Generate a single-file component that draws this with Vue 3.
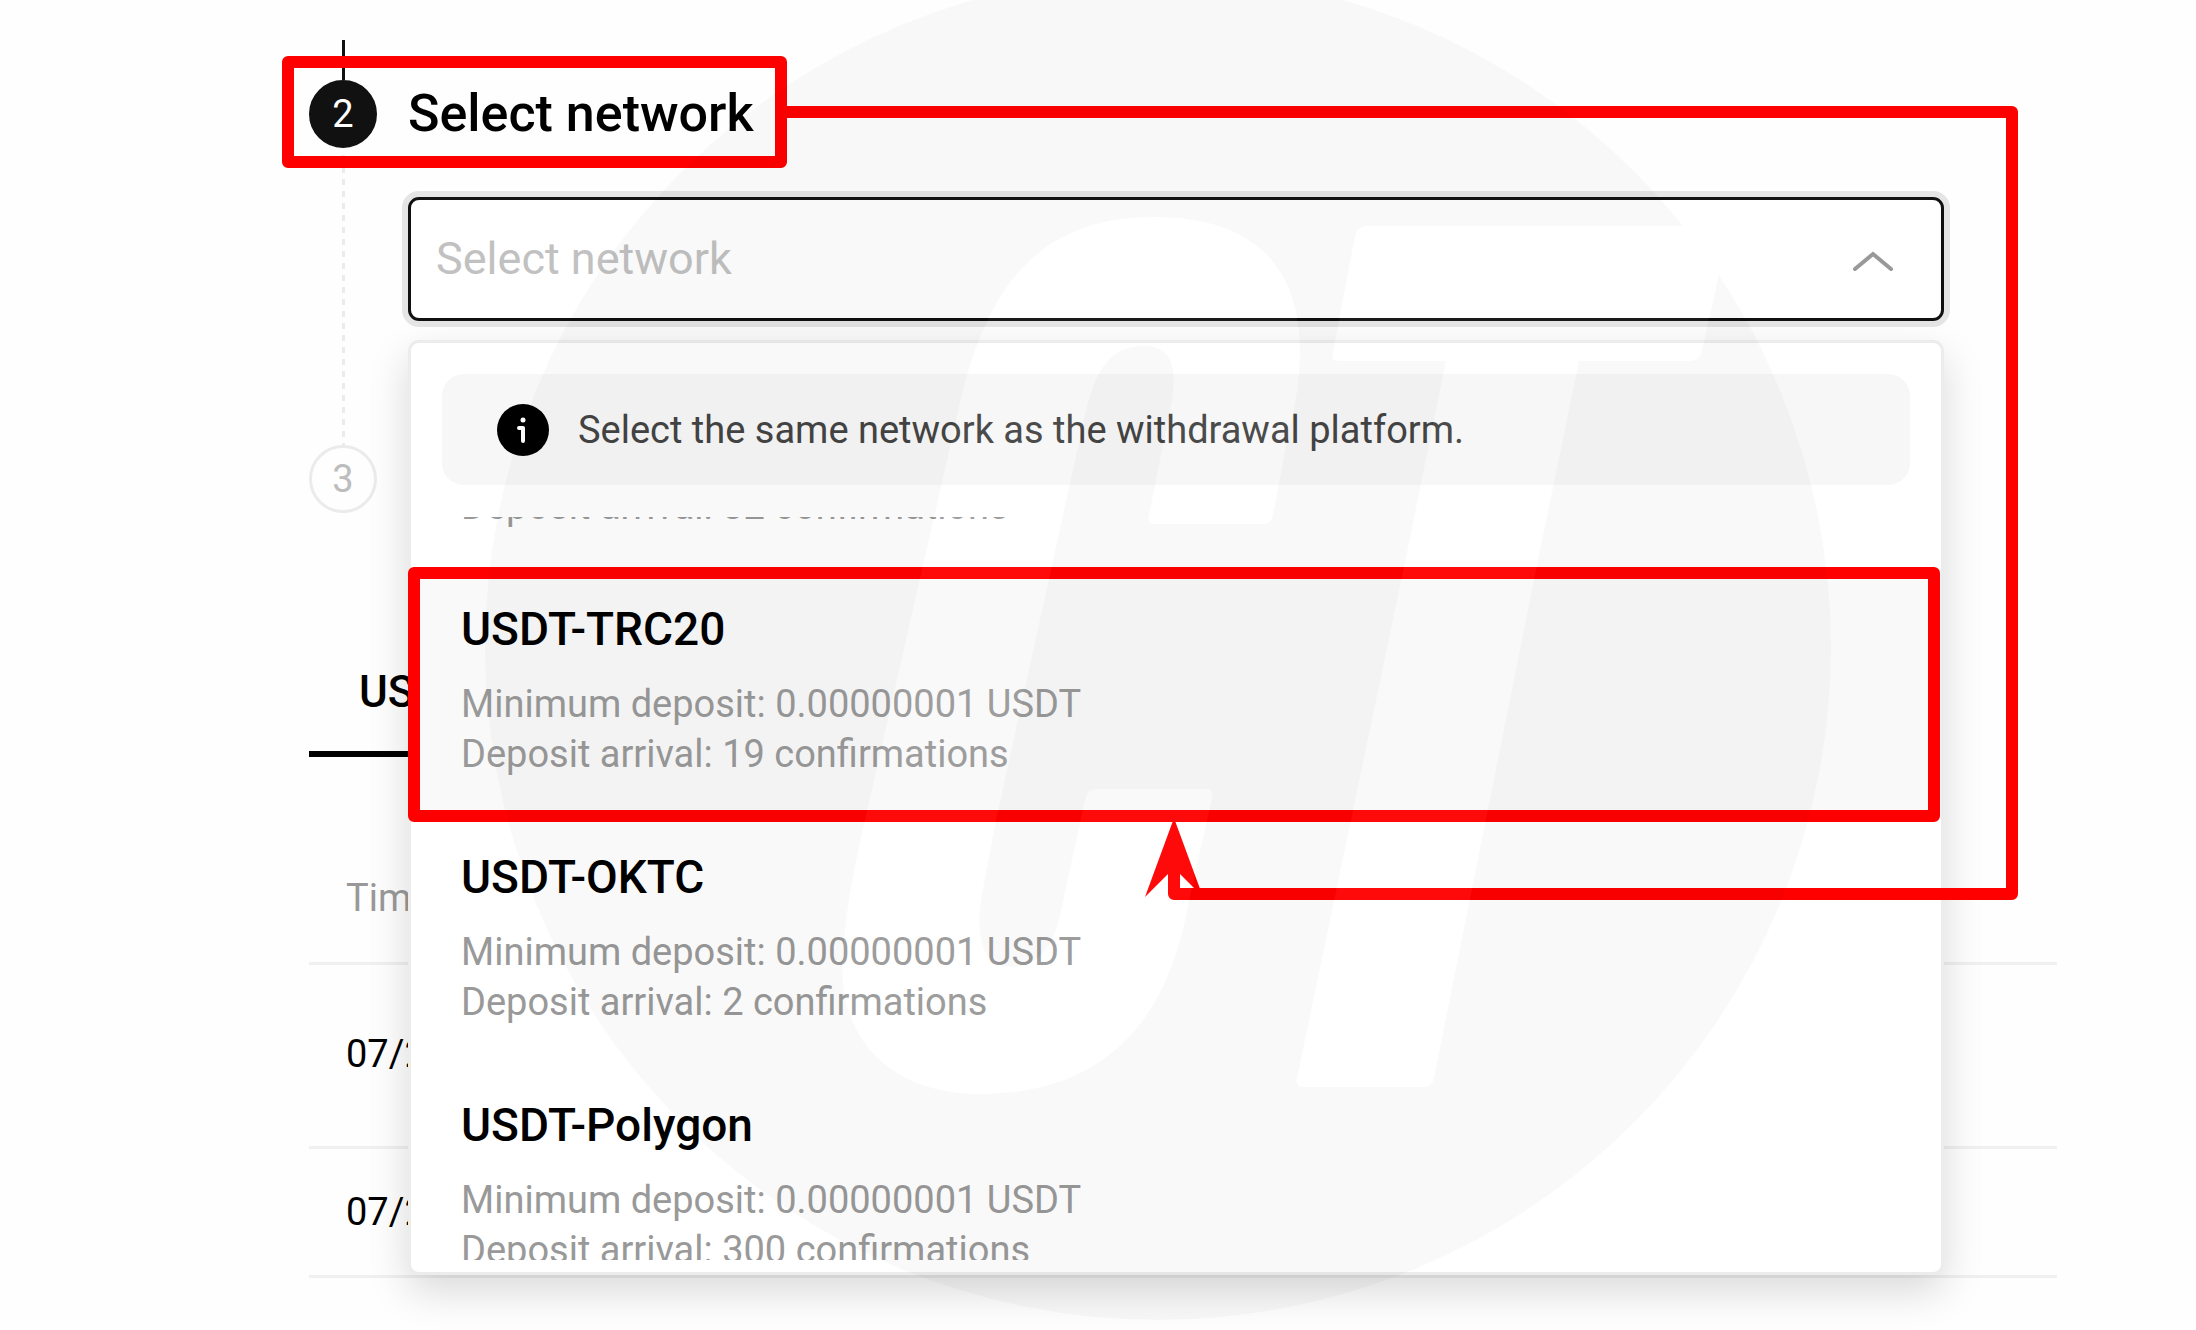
<script setup>
import { onMounted, ref } from 'vue'

const networks = [
  { name: 'USDT-ERC20', minimum: '0.00000001 USDT', confirmations: 32 },
  { name: 'USDT-TRC20', minimum: '0.00000001 USDT', confirmations: 19 },
  { name: 'USDT-OKTC', minimum: '0.00000001 USDT', confirmations: 2 },
  { name: 'USDT-Polygon', minimum: '0.00000001 USDT', confirmations: 300 }
]
const highlighted = 'USDT-TRC20'
const deposits = ['07/24', '07/24']
const list = ref(null)

// The first network is already scrolled past when the menu opens.
onMounted(() => {
  list.value.scrollTop = 196
})
</script>

<template>
  <main class="page">
    <section class="step">
      <div class="rail">
        <span class="line-done"></span>
        <span class="badge badge-active">2</span>
        <span class="line-next"></span>
      </div>
      <div class="body">
        <h2 class="title"><label for="network">Select network</label></h2>
        <div class="field">
          <select id="network" class="control">
            <option value="">Select network</option>
          </select>
          <svg class="chevron" viewBox="0 0 44 24" aria-hidden="true">
            <path d="M4 20 22 5 40 20" fill="none" stroke="#999" stroke-width="4" stroke-linecap="round" />
          </svg>
          <div class="menu">
            <p class="notice">
              <svg class="info" viewBox="0 0 52 52" aria-hidden="true">
                <circle cx="26" cy="26" r="26" fill="#000" />
                <circle cx="26" cy="16" r="2.500" fill="#fff" />
                <path d="M22 24h4V37" fill="none" stroke="#fff" stroke-width="4" stroke-linecap="round" stroke-linejoin="round" />
              </svg>
              Select the same network as the withdrawal platform.
            </p>
            <ul ref="list" class="list">
              <li v-for="n in networks" :key="n.name">
                <button type="button" class="option" :class="{ current: n.name === highlighted }">
                  <span class="name">{{ n.name }}</span>
                  <span class="detail">Minimum deposit: {{ n.minimum }}</span>
                  <span class="detail">Deposit arrival: {{ n.confirmations }} confirmations</span>
                </button>
              </li>
            </ul>
          </div>
        </div>
      </div>
    </section>

    <section class="step-upcoming"><span class="badge">3</span></section>

    <nav class="tabs"><button type="button" class="tab">USDT</button></nav>
    <table class="history">
      <thead>
        <tr><th>Time</th></tr>
      </thead>
      <tbody>
        <tr v-for="(d, i) in deposits" :key="i"><td>{{ d }}</td></tr>
      </tbody>
    </table>

    <svg class="overlay" viewBox="0 0 2196 1330" aria-hidden="true">
      <g fill="none" stroke="#f00" stroke-width="12" stroke-linejoin="round">
        <rect x="288" y="62" width="493" height="100" />
        <rect x="414" y="573" width="1520" height="243" />
        <path d="M787 112H2012V894H1174V860" />
      </g>
      <path d="M1174 818 1203 897 1174 868 1145 897Z" fill="#f00" />
      <defs>
        <path
          id="monogram"
          d="M1154 217C1245 217 1297 258 1300 345Q1301 385 1289 430L1273 515Q1271 524 1264 524H1153Q1147 524 1149 515L1170 410Q1184 346 1145 346C1110 346 1096 368 1085 415L996 820L981 900Q972 967 1012 967Q1046 967 1059 920L1085 800Q1087 789 1096 789H1206Q1214 789 1212 798L1188 905C1168 1020 1105 1094 980 1094C890 1094 836 1038 843 955Q845 905 865 820L958 412C985 285 1040 217 1154 217ZM1367 226H1730L1702 350Q1700 361 1691 361H1579L1536 570L1434 1078Q1432 1087 1424 1087H1303Q1295 1087 1297 1078L1404 567L1446 361H1338Q1331 361 1333 352L1355 236Q1357 226 1367 226Z"
        />
        <mask id="cutout">
          <rect width="2196" height="1330" fill="#fff" />
          <use href="#monogram" fill="#000" />
        </mask>
      </defs>
      <circle cx="1158" cy="647" r="673" fill="#000" fill-opacity="0.025" mask="url(#cutout)" />
      <use href="#monogram" fill="#fff" fill-opacity="0.040" />
    </svg>
  </main>
</template>

<style>
body {
  margin: 0;
  background: #fefefe;
}
</style>

<style scoped>
.page {
  position: relative;
  box-sizing: border-box;
  min-height: 100vh;
  padding: 40px 139px 0 309px;
  overflow: hidden;
  font-family: Roboto, "Noto Sans", sans-serif;
  color: #000;
}
.step {
  display: flex;
  gap: 31px;
  min-height: 405px;
}
.rail {
  display: flex;
  flex-direction: column;
  align-items: center;
  width: 68px;
}
.line-done {
  width: 3px;
  height: 40px;
  background: #111;
}
.badge {
  box-sizing: border-box;
  display: block;
  width: 68px;
  height: 68px;
  border: 3px solid #ebebeb;
  border-radius: 50%;
  font-size: 38px;
  line-height: 62px;
  text-align: center;
  color: #bdbdbd;
}
.badge-active {
  border-color: #111;
  background: #111;
  color: #fff;
}
.line-next {
  flex: 1;
  width: 3px;
  margin-top: 7px;
  background: repeating-linear-gradient(#ebebeb 0 6px, transparent 6px 12px);
}
.body {
  flex: 1;
  margin-right: 113px;
  padding-top: 40px;
}
.title {
  margin: 0 0 49px;
  font-size: 52px;
  font-weight: 500;
  line-height: 68px;
}
.field {
  position: relative;
}
.control {
  display: block;
  appearance: none;
  width: 100%;
  height: 124px;
  padding: 0 96px 2px 25px;
  border: 3px solid #111;
  border-radius: 11px;
  box-shadow: 0 0 0 6px #e5e5e5;
  background: #fff;
  font: 400 45px Roboto, "Noto Sans", sans-serif;
  color: #c1c1c1;
}
.chevron {
  position: absolute;
  top: 52px;
  right: 49px;
  width: 44px;
  height: 24px;
}
.menu {
  position: absolute;
  z-index: 1;
  top: 143px;
  left: 0;
  right: 0;
  padding: 31px 0 12px;
  border: 3px solid #ececec;
  border-radius: 11px;
  box-shadow: 0 16px 40px rgba(0, 0, 0, 0.15);
  background: #fff;
}
.notice {
  display: flex;
  align-items: center;
  gap: 29px;
  height: 111px;
  margin: 0 31px 32px;
  padding-left: 55px;
  border-radius: 22px;
  background: #f7f7f7;
  font-size: 38px;
  color: #444;
}
.info {
  width: 52px;
  height: 52px;
}
.list {
  height: 743px;
  margin: 0;
  padding: 0;
  overflow-y: auto;
  scrollbar-width: none;
  list-style: none;
}
.option {
  display: flex;
  flex-direction: column;
  width: 100%;
  padding: 32px 48px 38px 50px;
  border: 0;
  background: transparent;
  font: 400 38px/50px Roboto, "Noto Sans", sans-serif;
  text-align: left;
  color: #999;
}
.option.current {
  background: #f9f9f9;
}
.name {
  margin-bottom: 22px;
  font-size: 46px;
  font-weight: 500;
  line-height: 56px;
  color: #000;
}
.tabs {
  margin-top: 151px;
}
.tab {
  display: block;
  padding: 0 48px 31px 50px;
  border: 0;
  border-bottom: 6px solid #000;
  background: transparent;
  font: 500 44px/56px Roboto, "Noto Sans", sans-serif;
  color: #000;
}
.history {
  width: 100%;
  margin-top: 72px;
  border-collapse: separate;
  border-spacing: 0;
  font-size: 38px;
  text-align: left;
}
.history th,
.history td {
  box-sizing: border-box;
  padding: 0 37px;
  border-bottom: 3px solid #f0f0f0;
}
.history th {
  height: 136px;
  padding-top: 4px;
  font-weight: 400;
  color: #999;
}
.history td {
  height: 184px;
  padding-bottom: 4px;
}
.history tr:last-child td {
  height: 129px;
  padding-bottom: 0;
}
.overlay {
  position: absolute;
  z-index: 2;
  top: 0;
  left: 0;
  width: 2196px;
  pointer-events: none;
}
</style>
